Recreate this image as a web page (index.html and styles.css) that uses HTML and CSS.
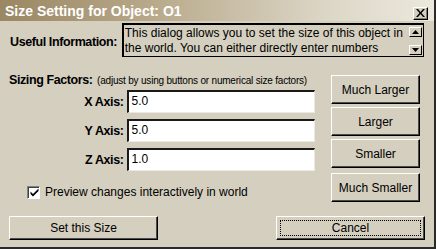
FILE: index.html
```html
<!DOCTYPE html>
<html>
<head>
<meta charset="utf-8">
<link rel="stylesheet" href="styles.css">
</head>
<body>
<div class="window">
  <div class="titlebar">
    <span class="title">Size Setting for Object: O1</span>
    <span class="close">
      <svg width="9" height="8" viewBox="0 0 9 8"><path d="M0 0h2l2.5 3 2.5-3h2l-3.5 4 3.5 4h-2l-2.5-3-2.5 3h-2l3.5-4z" fill="#000"/></svg>
    </span>
  </div>
  <div class="content">
    <div class="info-row">
      <div class="label info-label">Useful Information:</div>
      <div class="infobox">
        <div class="infotext">This dialog allows you to set the size of this object in<br>the world. You can either directly enter numbers</div>
        <div class="scrollbar">
          <div class="sbtn"><svg width="7" height="4" viewBox="0 0 7 4"><path d="M3.5 0L7 4H0z" fill="#000"/></svg></div>
          <div class="strack"></div>
          <div class="sbtn"><svg width="7" height="4" viewBox="0 0 7 4"><path d="M0 0h7L3.5 4z" fill="#000"/></svg></div>
        </div>
      </div>
    </div>
    <div class="main">
      <div class="left">
        <div class="heading"><span class="label">Sizing Factors:</span> <span class="hint">(adjust by using buttons or numerical size factors)</span></div>
        <div class="axis-row"><span class="label axis-label">X Axis:</span><div class="field">5.0</div></div>
        <div class="axis-row"><span class="label axis-label">Y Axis:</span><div class="field">5.0</div></div>
        <div class="axis-row"><span class="label axis-label">Z Axis:</span><div class="field">1.0</div></div>
        <div class="check-row">
          <span class="checkbox"><svg width="9" height="9" viewBox="0 0 9 9"><path d="M0.5 3.5l2.5 2.5 5.5-5.5v2.5l-5.5 5.5-2.5-2.5z" fill="#000"/></svg></span>
          <span class="check-text">Preview changes interactively in world</span>
        </div>
      </div>
      <div class="buttons">
        <div class="btn side">Much Larger</div>
        <div class="btn side">Larger</div>
        <div class="btn side">Smaller</div>
        <div class="btn side last">Much Smaller</div>
      </div>
    </div>
    <div class="bottom">
      <div class="btn wide">Set this Size</div>
      <div class="btn wide default"><span class="focus">Cancel</span></div>
    </div>
  </div>
</div>
</body>
</html>
```
FILE: styles.css
```css
html, body {
  margin: 0;
  padding: 0;
  background: #d4cfbf;
}
.window {
  width: 436px;
  height: 249px;
  box-sizing: border-box;
  background: #d4cfbf;
  border-right: 2px solid #2a2a2a;
  border-bottom: 2px solid #2a2a2a;
  display: flex;
  flex-direction: column;
  font-family: "Liberation Sans", Arial, sans-serif;
  color: #000;
}
.titlebar {
  height: 21px;
  flex: none;
  display: flex;
  align-items: center;
  justify-content: space-between;
  padding: 0 6px 0 5px;
  background: linear-gradient(to right, #9a8763 0%, #b8a98a 35%, #dcd6c6 75%, #ece8dd 100%);
}
.title {
  color: #fff;
  font-weight: bold;
  font-size: 14px;
}
.close {
  width: 15px;
  height: 13px;
  box-sizing: border-box;
  margin-top: 5px;
  background: #d4cfbf;
  border-top: 1px solid #fff;
  border-left: 1px solid #fff;
  border-right: 1px solid #000;
  border-bottom: 1px solid #000;
  box-shadow: inset -1px -1px 0 #808080;
  display: flex;
  align-items: center;
  justify-content: center;
}
.content {
  flex: 1;
  display: flex;
  flex-direction: column;
  padding: 2px 10px 0 9px;
}
.label {
  font-weight: bold;
  font-size: 12.5px;
  letter-spacing: -0.4px;
}
.info-row {
  display: flex;
  align-items: center;
  height: 34px;
}
.info-label {
  width: 112px;
  padding-left: 1px;
  padding-top: 3px;
}
.infobox {
  width: 303px;
  height: 34px;
  box-sizing: border-box;
  border: 1px solid #000;
  border-top-width: 2px;
  border-left-width: 2px;
  display: flex;
}
.infotext {
  flex: 1;
  font-size: 12px;
  line-height: 15px;
  padding: 1px 0 0 1px;
  white-space: nowrap;
  overflow: hidden;
}
.scrollbar {
  width: 13px;
  display: flex;
  flex-direction: column;
  padding: 2px 1px 1px 0;
}
.sbtn {
  height: 10px;
  box-sizing: border-box;
  border-top: 1px solid #fff;
  border-left: 1px solid #fff;
  border-right: 1px solid #000;
  border-bottom: 1px solid #000;
  display: flex;
  align-items: center;
  justify-content: center;
}
.strack {
  flex: 1;
}
.main {
  display: flex;
  margin-top: 18px;
  height: 127px;
}
.left {
  width: 306px;
  display: flex;
  flex-direction: column;
}
.heading {
  height: 16px;
  margin-top: -5px;
  white-space: nowrap;
}
.hint {
  font-size: 10px;
  letter-spacing: -0.2px;
}
.axis-row {
  display: flex;
  align-items: center;
  margin-top: 6px;
  height: 23px;
}
.heading + .axis-row {
  margin-top: 4px;
}
.axis-label {
  width: 116px;
  text-align: right;
  padding-right: 4px;
}
.field {
  width: 190px;
  height: 23px;
  box-sizing: border-box;
  background: #fff;
  border-top: 2px solid #1a1a1a;
  border-left: 2px solid #1a1a1a;
  border-right: 1px solid #ece9e0;
  border-bottom: 1px solid #ece9e0;
  font-size: 12px;
  padding: 2px 0 0 2px;
}
.check-row {
  display: flex;
  align-items: center;
  margin-top: 14px;
  padding-left: 18px;
}
.checkbox {
  width: 13px;
  height: 13px;
  box-sizing: border-box;
  background: #fff;
  border-top: 1px solid #808080;
  border-left: 1px solid #808080;
  border-right: 1px solid #fff;
  border-bottom: 1px solid #fff;
  box-shadow: inset 1px 1px 0 #404040;
  display: flex;
  align-items: center;
  justify-content: center;
  padding: 1px 0 0 1px;
}
.check-text {
  font-size: 12px;
  margin-left: 5px;
}
.buttons {
  margin-left: 16px;
  display: flex;
  flex-direction: column;
  gap: 3px;
}
.btn {
  box-sizing: border-box;
  background: #d4cfbf;
  border-top: 1px solid #fff;
  border-left: 1px solid #fff;
  border-right: 1px solid #000;
  border-bottom: 1px solid #000;
  box-shadow: inset -1px -1px 0 #4a4a4a;
  display: flex;
  align-items: center;
  justify-content: center;
  font-size: 12px;
}
.side {
  width: 89px;
  height: 29px;
}
.last {
  margin-top: 2px;
}
.bottom {
  display: flex;
  justify-content: space-between;
  margin-top: 14px;
}
.wide {
  width: 149px;
  height: 24px;
}
.default {
  margin-right: -1px;
  padding: 3px;
}
.focus {
  flex: 1;
  align-self: stretch;
  display: flex;
  align-items: center;
  justify-content: center;
  outline: 1px dotted #000;
  outline-offset: -1px;
}
```
